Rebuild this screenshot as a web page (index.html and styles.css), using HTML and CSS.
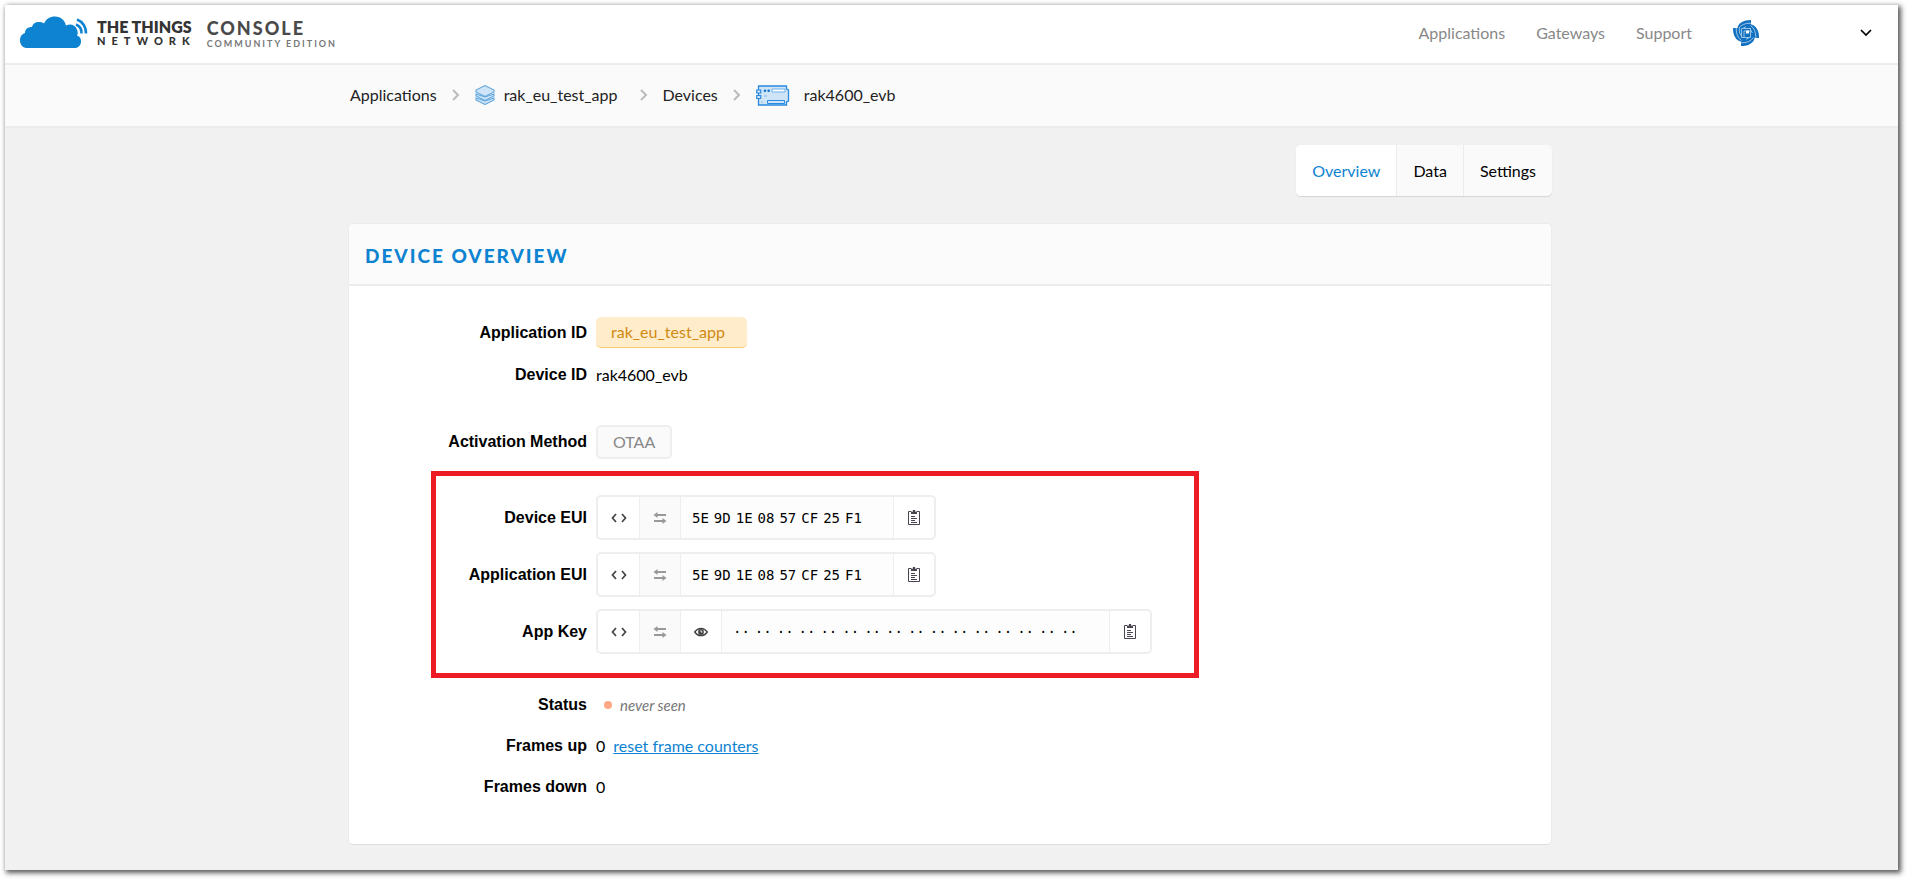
FILE: index.html
```html
<!DOCTYPE html>
<html lang="en">
<head>
<meta charset="utf-8">
<title>rak4600_evb - The Things Network Console</title>
<link rel="stylesheet" href="styles.css">
</head>
<body>
<svg class="sprite" aria-hidden="true">
  <symbol id="i-next" viewBox="0 0 8 12"><path d="M1 1l5 5-5 5" fill="none" stroke="#bbb" stroke-width="2"/></symbol>
  <symbol id="i-code" viewBox="0 0 16 10"><path d="M5 1L1.500 5L5 9M11 1l3.500 4L11 9" fill="none" stroke="#444" stroke-width="1.700"/></symbol>
  <symbol id="i-swap" viewBox="0 0 14 14"><path d="M3 4h10M1 10h10" stroke="#999" stroke-width="1.800"/><path d="M4.500 1v6L.5 4zM9.500 7v6l4-3z" fill="#999"/></symbol>
  <symbol id="i-copy" viewBox="0 0 12 15"><path d="M3.500 1.500h-3v13h11v-13h-3" fill="none" stroke="#4a4450"/><path d="M3 4V2h1.500L5 0h2l.5 2H9v2z" fill="#4a4450"/><path d="M3 6.500h4M3 8.500h6M3 10.500h4M3 12.500h6" stroke="#4a4450"/></symbol>
  <symbol id="i-eye" viewBox="0 0 14 10"><path d="M.8 5C4 .2 10 .2 13.200 5C10 9.800 4 9.800.8 5z" fill="none" stroke="#444" stroke-width="1.500"/><circle cx="7" cy="5" r="2.900" fill="#444"/><path d="M7 3.200v1.800h1.500" fill="none" stroke="#fff" stroke-width=".9"/></symbol>
</svg>
<div class="page">
  <header class="topbar">
    <a class="brand" href="#">
      <svg class="cloud" viewBox="0 0 70 34" aria-hidden="true">
        <path d="M7 32a7 7 0 0 1-6-7c0-5 2-7 5-8c0-4 3-6 7-6c1-4 4-5 7-5c2 0 4 .5 5 1.500C27 3 31 .5 36 .5c6 0 10 4 11 9c4-2 9-1 11 4c1 3 1 4 0 6c3 1 4 3 4 6c0 4-3 6.500-6 6.500z" fill="#0d83d1"/>
        <path d="M57 8.500a9 9 0 0 1 5.500 9M58 3.500a14 14 0 0 1 9 14" fill="none" stroke="#0d83d1" stroke-width="2.600"/>
      </svg>
      <span class="ttn"><span class="ttn-top">THE THINGS</span><span class="ttn-sub">NETWORK</span></span>
      <span class="console"><span class="console-top">CONSOLE</span><span class="console-sub">COMMUNITY EDITION</span></span>
    </a>
    <nav class="nav">
      <a href="#">Applications</a>
      <a href="#">Gateways</a>
      <a href="#">Support</a>
    </nav>
    <button class="account" type="button" aria-label="Account menu">
      <svg class="avatar" viewBox="0 0 26 26" aria-hidden="true">
        <g id="blade"><path d="M18 0v13H4.500Q3 5 9 2Q12 0 18 0z" fill="#1270c0"/><path d="M5.500 8.500Q9 3 18 3.200M9 9Q12 6 18 6.200" fill="none" stroke="#a9cdea" stroke-width=".9"/></g>
        <use href="#blade" transform="rotate(90 13 13)"/>
        <use href="#blade" transform="rotate(180 13 13)"/>
        <use href="#blade" transform="rotate(270 13 13)"/>
        <path d="M8.500 8.500h9v9h-9z" fill="#1270c0"/>
        <path d="M18 8.500H8.500V17.500H17.500V8.500M11 17v-6h6" fill="none" stroke="#a9cdea" stroke-width=".9"/><path d="M13 10.500h3v3h-3z" fill="#fff"/>
      </svg>
      <svg class="caret" viewBox="0 0 12 8" aria-hidden="true"><path d="M1 1l5 5 5-5" fill="none" stroke="#000" stroke-width="1.700"/></svg>
    </button>
  </header>

  <nav class="crumbbar" aria-label="Breadcrumb">
    <div class="wrap crumbs">
      <a href="#">Applications</a>
      <svg class="next"><use href="#i-next"/></svg>
      <a class="with-icon" href="#">
        <svg class="layers" viewBox="0 0 20 20" aria-hidden="true"><g fill="#cfe4f7" stroke="#5fa6dc" stroke-width="1.100"><path d="M1 13v2l9 4.500 9-4.500v-2l-9 3z"/><path d="M1 9v2l9 4.500 9-4.500V9l-9 3z"/><path d="M1 5v2l9 4.500L19 7V5l-9-4.400z"/></g></svg>
        rak_eu_test_app</a>
      <svg class="next"><use href="#i-next"/></svg>
      <a href="#">Devices</a>
      <svg class="next"><use href="#i-next"/></svg>
      <a class="with-icon board-link" href="#">
        <svg class="board" viewBox="0 0 34 21" aria-hidden="true"><path d="M2.500 1h28v3l2 1v11l-2 1v3h-28z" fill="#cfe4f7" stroke="#2a8ae0" stroke-width="1.300"/><path d="M.7 5h4v3h-4zM.7 10.500h4v3h-4z" fill="#cfe4f7" stroke="#2a8ae0" stroke-width="1.200"/><path d="M16 4h13v3H16z" fill="#fff" stroke="#6fb0ea"/><path d="M11.500 15.500h17v3h-17z" fill="#cfe4f7" stroke="#2a8ae0"/><circle cx="9" cy="5.700" r="1.300" fill="#0d74d0"/><circle cx="12.700" cy="5.700" r="1.300" fill="#0d74d0"/><path d="M8 11h3M5 17h2" stroke="#9cc9f2" stroke-width="1.500"/></svg>
        rak4600_evb</a>
    </div>
  </nav>

  <main class="wrap">
    <nav class="tabs" aria-label="Device">
      <a class="active" href="#">Overview</a>
      <a href="#">Data</a>
      <a href="#">Settings</a>
    </nav>

    <section class="card">
      <h1>DEVICE OVERVIEW</h1>
      <div class="rows">
        <div class="row"><span class="label">Application ID</span><a class="badge" href="#">rak_eu_test_app</a></div>
        <div class="row device-id"><span class="label">Device ID</span><span>rak4600_evb</span></div>
        <div class="row activation"><span class="label">Activation Method</span><span class="tag">OTAA</span></div>

        <div class="keys">
          <div class="row"><span class="label">Device EUI</span>
            <div class="field">
              <button type="button" aria-label="Toggle format"><svg class="code"><use href="#i-code"/></svg></button>
              <button class="muted" type="button" aria-label="Switch byte order"><svg class="swap"><use href="#i-swap"/></svg></button>
              <code><span>5E</span><span>9D</span><span>1E</span><span>08</span><span>57</span><span>CF</span><span>25</span><span>F1</span></code>
              <button type="button" aria-label="Copy Device EUI"><svg class="copy"><use href="#i-copy"/></svg></button>
            </div>
          </div>
          <div class="row"><span class="label">Application EUI</span>
            <div class="field">
              <button type="button" aria-label="Toggle format"><svg class="code"><use href="#i-code"/></svg></button>
              <button class="muted" type="button" aria-label="Switch byte order"><svg class="swap"><use href="#i-swap"/></svg></button>
              <code><span>5E</span><span>9D</span><span>1E</span><span>08</span><span>57</span><span>CF</span><span>25</span><span>F1</span></code>
              <button type="button" aria-label="Copy Application EUI"><svg class="copy"><use href="#i-copy"/></svg></button>
            </div>
          </div>
          <div class="row"><span class="label">App Key</span>
            <div class="field">
              <button type="button" aria-label="Toggle format"><svg class="code"><use href="#i-code"/></svg></button>
              <button class="muted" type="button" aria-label="Switch byte order"><svg class="swap"><use href="#i-swap"/></svg></button>
              <button type="button" aria-label="Show key"><svg class="eye"><use href="#i-eye"/></svg></button>
              <code><span>··</span><span>··</span><span>··</span><span>··</span><span>··</span><span>··</span><span>··</span><span>··</span><span>··</span><span>··</span><span>··</span><span>··</span><span>··</span><span>··</span><span>··</span><span>··</span></code>
              <button type="button" aria-label="Copy App Key"><svg class="copy"><use href="#i-copy"/></svg></button>
            </div>
          </div>
          <div class="highlight"></div>
        </div>

        <div class="row stat"><span class="label">Status</span><span class="status">never seen</span></div>
        <div class="row stat"><span class="label">Frames up</span><span>0</span><a class="reset" href="#">reset frame counters</a></div>
        <div class="row stat"><span class="label">Frames down</span><span>0</span></div>
      </div>
    </section>
  </main>
</div>
</body>
</html>
```

FILE: styles.css
```css
* { box-sizing: border-box; }
body {
  margin: 0;
  padding: 5px 9px 9px 5px;
  background: #fff;
  color: #000;
  font: 16px/22px Lato, "Open Sans", sans-serif;
}
a { color: inherit; text-decoration: none; }
button { border: 0; padding: 0; background: none; font: inherit; cursor: pointer; }
svg { display: block; flex: none; }
.sprite { position: absolute; width: 0; height: 0; }

.page {
  min-height: calc(100vh - 14px);
  background: #f1f1f1;
  box-shadow: 2px 2px 5px 1px rgba(0, 0, 0, .65);
}
.wrap { max-width: 1207px; margin: 0 auto; padding-right: 3px; }

/* Top bar */
.topbar {
  display: flex;
  align-items: center;
  height: 60px;
  padding: 0 26px 2px 14px;
  background: #fff;
  border-bottom: 2px solid #ececec;
}
.brand {
  display: flex;
  align-items: center;
  margin-right: auto;
}
.cloud { width: 70px; height: 34px; }
.ttn, .console { display: flex; flex-direction: column; }
.ttn { margin-left: 8px; color: #333; }
.ttn-top { font: 800 16px/16px Lato, sans-serif; }
.ttn-sub { font: 900 11px/12px Lato, sans-serif; letter-spacing: 6px; }
.console { margin-left: 11px; color: #4a4a4a; }
.console-top { font: 900 18px/20px Lato, sans-serif; letter-spacing: 2px; }
.console-sub { font: 700 9px/11px Lato, sans-serif; letter-spacing: 2px; color: #777; }
.nav { display: flex; gap: 31px; color: #888; }
.account {
  display: flex;
  align-items: center;
  justify-content: space-between;
  width: 139px;
  margin-left: 41px;
}
.avatar { width: 26px; height: 26px; }
.caret { width: 12px; height: 8px; }

/* Breadcrumbs */
.crumbbar { background: #fafafa; border-bottom: 2px solid #ececec; }
.crumbs { display: flex; align-items: center; height: 61px; padding: 0 2px 1px; color: #222; }
.next { width: 8px; height: 12px; margin: 0 15px; }
.with-icon { display: flex; align-items: center; gap: 9px; }
.with-icon + .next { margin-left: 22px; }
.layers { width: 20px; height: 20px; }
.board-link { gap: 14px; }
.board { width: 34px; height: 21px; }

/* Tabs */
.tabs {
  display: flex;
  width: max-content;
  margin: 17px 0 27px auto;
  background: #fafafa;
  border-radius: 5px;
  box-shadow: 0 1px 1px rgba(0, 0, 0, .12);
  overflow: hidden;
}
.tabs a { padding: 15px 16px 14px; }
.tabs a + a { border-left: 1px solid #ececec; }
.tabs .active { background: #fff; color: #0d83d1; }

/* Card */
.card {
  background: #fff;
  border: 1px solid #ebebeb;
  border-bottom-color: #ddd;
  border-radius: 5px;
}
.card h1 {
  margin: 0;
  padding: 20px 16px 16px;
  background: #fbfbfb;
  border-bottom: 2px solid #ececec;
  border-radius: 5px 5px 0 0;
  color: #0d83d1;
  font: 900 19px/24px Lato, sans-serif;
  letter-spacing: 2px;
}
.rows { padding: 31px 0 46px; }
.row { display: flex; align-items: center; }
.label {
  width: 238px;
  margin-right: 9px;
  text-align: right;
  font: 700 16px/22px "Liberation Sans", Arial, sans-serif;
}
.badge {
  padding: 4px 22px 4px 15px;
  background: #ffeccb;
  border-bottom: 1px solid #fbcb6b;
  border-radius: 5px;
  color: #d08a10;
}
.device-id { margin-top: 16px; }
.activation { margin-top: 39px; }
.tag {
  padding: 4px 15px;
  background: #fafafa;
  border: 2px solid #eee;
  border-radius: 5px;
  color: #888;
}

/* Identifier fields */
.keys {
  position: relative;
  display: grid;
  gap: 12px;
  margin: 36px 0 40px;
}
.highlight {
  position: absolute;
  inset: -24px auto -24px 82px;
  width: 768px;
  border: 5px solid #ed1c24;
  pointer-events: none;
}
.field {
  display: flex;
  height: 45px;
  border: 2px solid #eee;
  border-radius: 5px;
  background: #fff;
}
.field button { display: grid; place-items: center; width: 41px; }
.field > * + * { border-left: 1px solid #eee; }
.field .muted { background: #fafafa; }
.field code {
  display: flex;
  align-items: center;
  gap: 5px;
  padding: 0 31px 0 11px;
  background: #fdfdfd;
  font: 14px/20px "DejaVu Sans Mono", monospace;
}
.code { width: 16px; height: 10px; }
.swap { width: 14px; height: 14px; }
.copy { width: 12px; height: 15px; }
.eye { width: 14px; height: 10px; }

/* Statistics */
.stat + .stat { margin-top: 19px; }
.status {
  display: flex;
  align-items: center;
  gap: 8px;
  padding-left: 8px;
  color: #777;
  font-size: 15px;
  font-style: italic;
}
.status::before {
  content: "";
  width: 8px;
  height: 8px;
  border-radius: 50%;
  background: #ffa784;
}
.reset { margin-left: 8px; color: #0d83d1; text-decoration: underline; }
```
